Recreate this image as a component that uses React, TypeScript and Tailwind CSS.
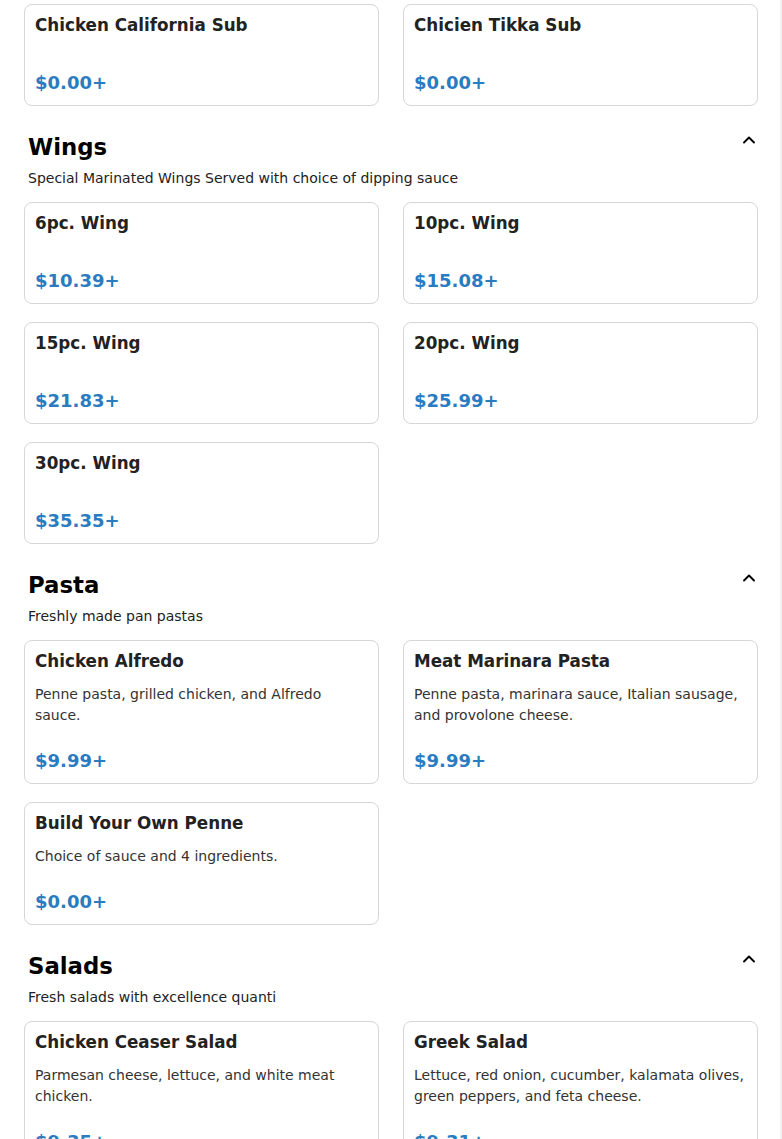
import { ChevronUp } from 'lucide-react';

interface Item {
  name: string;
  desc?: string;
  price: string;
}

interface Section {
  title?: string;
  desc?: string;
  items: Item[];
}

const SECTIONS: Section[] = [
  {
    items: [
      { name: 'Chicken California Sub', price: '$0.00+' },
      { name: 'Chicien Tikka Sub', price: '$0.00+' },
    ],
  },
  {
    title: 'Wings',
    desc: 'Special Marinated Wings Served with choice of dipping sauce',
    items: [
      { name: '6pc. Wing', price: '$10.39+' },
      { name: '10pc. Wing', price: '$15.08+' },
      { name: '15pc. Wing', price: '$21.83+' },
      { name: '20pc. Wing', price: '$25.99+' },
      { name: '30pc. Wing', price: '$35.35+' },
    ],
  },
  {
    title: 'Pasta',
    desc: 'Freshly made pan pastas',
    items: [
      {
        name: 'Chicken Alfredo',
        desc: 'Penne pasta, grilled chicken, and Alfredo sauce.',
        price: '$9.99+',
      },
      {
        name: 'Meat Marinara Pasta',
        desc: 'Penne pasta, marinara sauce, Italian sausage, and provolone cheese.',
        price: '$9.99+',
      },
      {
        name: 'Build Your Own Penne',
        desc: 'Choice of sauce and 4 ingredients.',
        price: '$0.00+',
      },
    ],
  },
  {
    title: 'Salads',
    desc: 'Fresh salads with excellence quanti',
    items: [
      {
        name: 'Chicken Ceaser Salad',
        desc: 'Parmesan cheese, lettuce, and white meat chicken.',
        price: '$9.35+',
      },
      {
        name: 'Greek Salad',
        desc: 'Lettuce, red onion, cucumber, kalamata olives, green peppers, and feta cheese.',
        price: '$9.31+',
      },
    ],
  },
];

function MenuCard({ item }: { item: Item }) {
  return (
    <div className="flex flex-col rounded-lg border border-[#d6d6d6] bg-white px-[10px] pt-[8px] pb-[10px]">
      <h3 className="text-[16.75px] font-bold leading-[24px] text-[#222]">{item.name}</h3>
      {/* description block keeps its margins even when empty */}
      <p className="mt-[11px] mb-[23px] text-[14px] leading-[21px] text-[#333]">{item.desc}</p>
      <div className="text-[18px] font-bold leading-[24px] text-[#2b7bc1]">{item.price}</div>
    </div>
  );
}

export default function App() {
  return (
    <div
      className="h-[1139px] overflow-hidden border-r-2 border-[#f3f3f3] bg-white pl-6 pr-[22px] pt-1"
      style={{ fontFamily: '"DejaVu Sans", sans-serif' }}
    >
      {SECTIONS.map((section, i) => (
        <section key={i} className={i > 0 ? 'mt-[26px]' : ''}>
          {section.title && (
            <div className="mb-[13px] pl-1">
              <div className="flex items-start justify-between">
                <h2 className="text-[22.8px] font-bold leading-[30px] text-black">{section.title}</h2>
                <ChevronUp className="-mr-px -mt-[2px] h-5 w-5 text-black" strokeWidth={2.25} />
              </div>
              <p className="mt-[6px] text-[14px] leading-[21px] text-[#222]">{section.desc}</p>
            </div>
          )}
          <div className="grid grid-cols-2 gap-x-6 gap-y-[18px]">
            {section.items.map((item) => (
              <MenuCard key={item.name} item={item} />
            ))}
          </div>
        </section>
      ))}
    </div>
  );
}
